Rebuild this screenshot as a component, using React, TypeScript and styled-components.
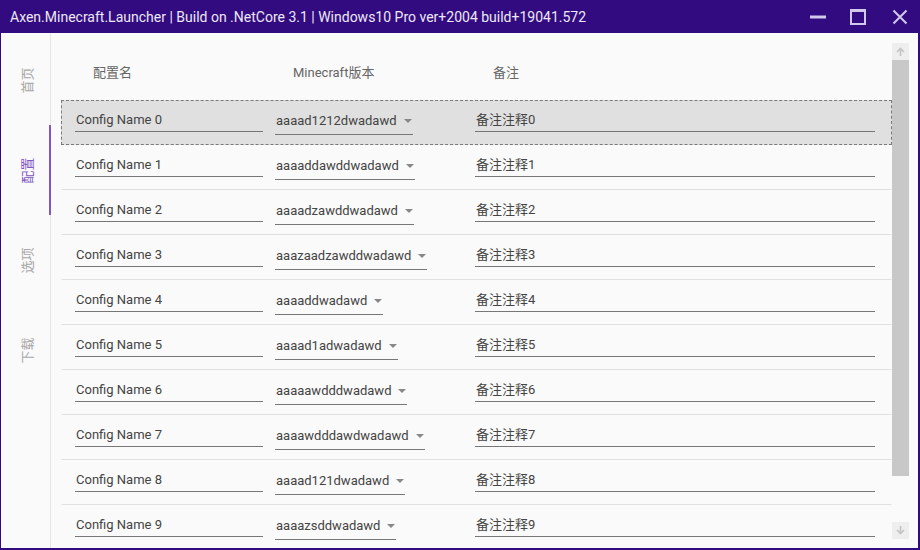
import React from "react";
import styled, { createGlobalStyle } from "styled-components";

const GlobalStyle = createGlobalStyle`
  html, body { margin: 0; padding: 0; background: #fafafa; }
  body { font-family: Roboto, "Noto Sans CJK SC", sans-serif; }
  * { box-sizing: border-box; }
`;

const PURPLE = "#320b80";
const FONT = `Roboto, "Noto Sans CJK SC", sans-serif`;

const Window = styled.div`
  width: 920px;
  height: 550px;
  display: flex;
  flex-direction: column;
  border-left: 1px solid ${PURPLE};
  border-right: 2px solid ${PURPLE};
  border-bottom: 2px solid ${PURPLE};
  background: #fafafa;
  overflow: hidden;
`;

const TitleBar = styled.div`
  height: 33px;
  flex: none;
  background: ${PURPLE};
  display: flex;
  align-items: center;
  padding-left: 9px;
`;

const Title = styled.div`
  flex: 1;
  color: #ece8f4;
  font-family: ${FONT};
  font-size: 14px;
  padding-top: 1px;
  white-space: nowrap;
`;

const WinButtons = styled.div`
  display: flex;
  align-items: center;
  height: 100%;
`;

const WinButton = styled.div<{ $shift?: number }>`
  width: 40px;
  height: 33px;
  display: flex;
  align-items: center;
  justify-content: center;
  padding-left: ${(p) => p.$shift ?? 0}px;
`;

const Body = styled.div`
  flex: 1;
  display: flex;
  min-height: 0;
`;

const Sidebar = styled.div`
  width: 50px;
  flex: none;
  padding-top: 2px;
  display: flex;
  flex-direction: column;
  box-shadow: inset -1px 0 0 #e6e6e6;
`;

const NavItem = styled.div<{ $active?: boolean }>`
  height: 90px;
  display: flex;
  align-items: center;
  justify-content: center;
  border-right: 2px solid ${(p) => (p.$active ? "#7e57c2" : "transparent")};
  color: ${(p) => (p.$active ? "#7e57c2" : "#a8a8a8")};
  font-family: ${FONT};
  font-size: 13px;
  padding-left: 2px;
`;

const NavLabel = styled.span`
  display: inline-block;
  transform: rotate(-90deg);
  white-space: nowrap;
`;

const Main = styled.div`
  flex: 1;
  display: flex;
  min-width: 0;
`;

const Content = styled.div`
  flex: 1;
  padding-left: 10px;
  overflow: hidden;
  display: flex;
  flex-direction: column;
`;

const HeaderRow = styled.div`
  height: 67px;
  flex: none;
  display: grid;
  grid-template-columns: 200px 200px 1fr;
  align-items: center;
  padding-top: 9px;
  font-family: ${FONT};
  font-size: 13px;
  color: #666;
`;

const HeaderCell = styled.div`
  padding-left: 32px;
`;

const Row = styled.div<{ $selected?: boolean }>`
  height: 45px;
  flex: none;
  display: grid;
  grid-template-columns: 200px 200px 1fr;
  align-items: start;
  background: ${(p) => (p.$selected ? "#e0e0e0" : "transparent")};
  border: 1px dashed ${(p) => (p.$selected ? "#7a7a7a" : "transparent")};
  border-bottom: 1px ${(p) => (p.$selected ? "dashed #7a7a7a" : "solid #e0e0e0")};
  width: 831px;
`;

const Cell = styled.div`
  padding-left: 13px;
`;

const TextBox = styled.div<{ $w: number }>`
  width: ${(p) => p.$w}px;
  margin-top: 10px;
  height: 21px;
  line-height: 18px;
  border-bottom: 1px solid #777;
  padding-left: 1px;
  font-family: ${FONT};
  font-size: 13px;
  color: #444;
  white-space: nowrap;
`;

const Combo = styled.div`
  display: inline-flex;
  align-items: center;
  margin-top: 10px;
  height: 24px;
  line-height: 20px;
  padding-bottom: 4px;
  border-bottom: 1px solid #777;
  padding-left: 1px;
  font-family: ${FONT};
  font-size: 13px;
  color: #444;
  white-space: nowrap;
`;

const Arrow = styled.span`
  width: 0;
  height: 0;
  margin-left: 7px;
  margin-right: 1px;
  border-left: 4px solid transparent;
  border-right: 4px solid transparent;
  border-top: 4px solid #888;
`;

const ScrollBar = styled.div`
  width: 17px;
  flex: none;
  margin: 10px 9px 9px 0;
  display: flex;
  flex-direction: column;
`;

const ScrollBtn = styled.div`
  height: 17px;
  flex: none;
  background: #eeeeee;
  display: flex;
  align-items: center;
  justify-content: center;
`;

const Thumb = styled.div`
  height: 416px;
  flex: none;
  background: #c8c8c8;
`;

const Track = styled.div`
  flex: 1;
`;

const versions = [
  "aaaad1212dwadawd",
  "aaaaddawddwadawd",
  "aaaadzawddwadawd",
  "aaazaadzawddwadawd",
  "aaaaddwadawd",
  "aaaad1adwadawd",
  "aaaaawdddwadawd",
  "aaaawdddawdwadawd",
  "aaaad121dwadawd",
  "aaaazsddwadawd",
];

const navs = ["首页", "配置", "选项", "下载"];

export default function App() {
  return (
    <>
      <GlobalStyle />
      <Window>
        <TitleBar>
          <Title>Axen.Minecraft.Launcher | Build on .NetCore 3.1 | Windows10 Pro ver+2004 build+19041.572</Title>
          <WinButtons>
            <WinButton>
              <svg width="16" height="16" viewBox="0 0 16 16">
                <rect x="0" y="6.5" width="16" height="3" fill="#d2c8ea" />
              </svg>
            </WinButton>
            <WinButton>
              <svg width="16" height="16" viewBox="0 0 16 16">
                <rect x="1" y="1" width="14" height="14" fill="none" stroke="#d2c8ea" strokeWidth="2" />
                <rect x="0" y="0" width="16" height="3" fill="#d2c8ea" />
              </svg>
            </WinButton>
            <WinButton $shift={4}>
              <svg width="16" height="16" viewBox="0 0 16 16">
                <path d="M1.5 1.5 L14.5 14.5 M14.5 1.5 L1.5 14.5" stroke="#d2c8ea" strokeWidth="2" />
              </svg>
            </WinButton>
          </WinButtons>
        </TitleBar>
        <Body>
          <Sidebar>
            {navs.map((n, i) => (
              <NavItem key={n} $active={i === 1}>
                <NavLabel>{n}</NavLabel>
              </NavItem>
            ))}
          </Sidebar>
          <Main>
            <Content>
              <HeaderRow>
                <HeaderCell>配置名</HeaderCell>
                <HeaderCell>Minecraft版本</HeaderCell>
                <HeaderCell>备注</HeaderCell>
              </HeaderRow>
              {versions.map((v, i) => (
                <Row key={i} $selected={i === 0}>
                  <Cell>
                    <TextBox $w={188}>Config Name {i}</TextBox>
                  </Cell>
                  <Cell>
                    <Combo>
                      {v}
                      <Arrow />
                    </Combo>
                  </Cell>
                  <Cell>
                    <TextBox $w={400}>备注注释{i}</TextBox>
                  </Cell>
                </Row>
              ))}
            </Content>
            <ScrollBar>
              <ScrollBtn>
                <svg width="9" height="9" viewBox="0 0 9 9">
                  <path d="M4.5 9 V1.5 M1 5 L4.5 1.5 L8 5" stroke="#c4c4c4" strokeWidth="1.6" fill="none" />
                </svg>
              </ScrollBtn>
              <Thumb />
              <Track />
              <ScrollBtn>
                <svg width="9" height="9" viewBox="0 0 9 9">
                  <path d="M4.5 0 V7.5 M1 4 L4.5 7.5 L8 4" stroke="#c4c4c4" strokeWidth="1.6" fill="none" />
                </svg>
              </ScrollBtn>
            </ScrollBar>
          </Main>
        </Body>
      </Window>
    </>
  );
}
